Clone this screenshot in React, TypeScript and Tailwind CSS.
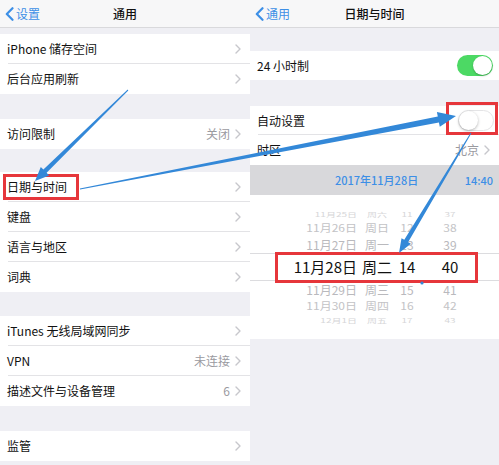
import React from 'react';

const FONT = { fontFamily: '"Noto Sans CJK SC", "Noto Sans", sans-serif' };

const Chevron: React.FC = () => (
  <svg width="6" height="10" viewBox="0 0 6 10" className="ml-[5px] shrink-0">
    <path d="M1 1l4 4-4 4" fill="none" stroke="#c7c7cc" strokeWidth="1.4" strokeLinecap="round" strokeLinejoin="round" />
  </svg>
);

const BackChevron: React.FC = () => (
  <svg width="9" height="14" viewBox="0 0 9 14" className="shrink-0">
    <path d="M7.5 1.2L1.8 7l5.7 5.8" fill="none" stroke="#3d8fe6" strokeWidth="2.2" strokeLinecap="round" strokeLinejoin="round" />
  </svg>
);

type RowProps = { label: string; value?: string; chevron?: boolean; last?: boolean; h?: string; children?: React.ReactNode };

const Row: React.FC<RowProps> = ({ label, value, chevron = true, last, h = 'h-[30px]', children }) => (
  <div className={`relative ${h} bg-white flex items-center pl-[7px] pr-[9px]`}>
    <span className="text-[12px] text-[#111] flex-1">{label}</span>
    {value && <span className="text-[12px] text-[#9a9a9f]">{value}</span>}
    {children}
    {chevron && <Chevron />}
    {!last && <div className="absolute left-[8px] right-0 bottom-0 h-px bg-[#e3e3e6]" />}
  </div>
);

const NavBar: React.FC<{ back: string; title: string }> = ({ back, title }) => (
  <div className="relative h-[28px] bg-[#f7f7f8] border-b border-[#d9d9dc] flex items-center justify-center">
    <div className="absolute left-[5px] top-0 h-full flex items-center gap-[2px]">
      <BackChevron />
      <span className="text-[12px] text-[#3d8fe6]">{back}</span>
    </div>
    <span className="text-[12px] text-[#111] font-medium">{title}</span>
  </div>
);

const Toggle: React.FC<{ on: boolean }> = ({ on }) =>
  on ? (
    <div className="w-[36px] h-[21px] rounded-full bg-[#4cd964] flex items-center justify-end pr-[1px]">
      <div className="w-[19px] h-[19px] rounded-full bg-white shadow-[0_1px_2px_rgba(0,0,0,0.25)]" />
    </div>
  ) : (
    <div className="w-[36px] h-[21px] rounded-full bg-white border border-[#e4e4e6] flex items-center pl-[0px]">
      <div className="w-[19px] h-[19px] rounded-full bg-white shadow-[0_1px_3px_rgba(0,0,0,0.3)]" />
    </div>
  );

type PickRow = { d: string; w: string; h: string; m: string; cls: string; hCls: string };

const pickerRows: PickRow[] = [
  { d: '11月25日', w: '周六', h: '11', m: '37', cls: 'text-[10px] text-[#d6d6d8] scale-y-[0.6]', hCls: 'h-[12px]' },
  { d: '11月26日', w: '周日', h: '12', m: '38', cls: 'text-[12px] text-[#c3c3c6] scale-y-[0.85]', hCls: 'h-[16px]' },
  { d: '11月27日', w: '周一', h: '13', m: '39', cls: 'text-[12px] text-[#b9b9bd]', hCls: 'h-[17px]' },
  { d: '11月28日', w: '周二', h: '14', m: '40', cls: 'text-[15px] text-[#111]', hCls: 'h-[28px] border-y border-[#dcdcdf]' },
  { d: '11月29日', w: '周三', h: '15', m: '41', cls: 'text-[12px] text-[#b9b9bd]', hCls: 'h-[17px]' },
  { d: '11月30日', w: '周四', h: '16', m: '42', cls: 'text-[12px] text-[#c3c3c6] scale-y-[0.85]', hCls: 'h-[16px]' },
  { d: '12月1日', w: '周五', h: '17', m: '43', cls: 'text-[10px] text-[#d6d6d8] scale-y-[0.6]', hCls: 'h-[12px]' },
];

// tapered arrow polygon from (x0,y0) to tip (x1,y1)
function arrow(x0: number, y0: number, x1: number, y1: number, w0: number, w1: number, hl: number, hw: number) {
  const dx = x1 - x0;
  const dy = y1 - y0;
  const len = Math.hypot(dx, dy);
  const ux = dx / len;
  const uy = dy / len;
  const nx = -uy;
  const ny = ux;
  const bx = x1 - ux * hl;
  const by = y1 - uy * hl;
  const p = (x: number, y: number) => `${x.toFixed(1)},${y.toFixed(1)}`;
  return [
    p(x0 + nx * w0 / 2, y0 + ny * w0 / 2),
    p(bx + nx * w1 / 2, by + ny * w1 / 2),
    p(bx + nx * hw / 2, by + ny * hw / 2),
    p(x1, y1),
    p(bx - nx * hw / 2, by - ny * hw / 2),
    p(bx - nx * w1 / 2, by - ny * w1 / 2),
    p(x0 - nx * w0 / 2, y0 - ny * w0 / 2),
  ].join(' ');
}

const App: React.FC = () => {
  return (
    <div className="relative w-[499px] h-[465px] overflow-hidden flex bg-[#efeff4]" style={FONT}>
      {/* left screen: 通用 */}
      <div className="w-[250px] h-full flex flex-col bg-[#efeff4]">
        <NavBar back="设置" title="通用" />
        <div className="h-[6px]" />
        <Row label="iPhone 储存空间" />
        <Row label="后台应用刷新" last />
        <div className="h-[25px]" />
        <Row label="访问限制" value="关闭" last />
        <div className="h-[23px]" />
        <Row label="日期与时间" />
        <Row label="键盘" />
        <Row label="语言与地区" />
        <Row label="词典" last />
        <div className="h-[24px]" />
        <Row label="iTunes 无线局域网同步" />
        <Row label="VPN" value="未连接" />
        <Row label="描述文件与设备管理" value="6" last />
        <div className="h-[25px]" />
        <Row label="监管" last />
      </div>

      {/* right screen: 日期与时间 */}
      <div className="w-[249px] h-full flex flex-col bg-[#efeff4]">
        <NavBar back="通用" title="日期与时间" />
        <div className="h-[23px]" />
        <Row label="24 小时制" chevron={false} last h="h-[29px]">
          <div className="mr-[-3px]">
            <Toggle on />
          </div>
        </Row>
        <div className="h-[26px]" />
        <Row label="自动设置" chevron={false} h="h-[29px]">
          <div className="mr-[-4px]">
            <Toggle on={false} />
          </div>
        </Row>
        <Row label="时区" value="北京" last />
        <div className="h-[30px] bg-[#d8d8db] flex items-center text-[11px] font-medium text-[#3d8fe6]">
          <span className="ml-[85px]">2017年11月28日</span>
          <span className="ml-auto mr-[6px]">14:40</span>
        </div>
        <div className="h-[144px] bg-white pt-[13px]">
          {pickerRows.map((r) => (
            <div key={r.d} className={`${r.hCls} flex items-center`}>
              <div className={`flex items-center w-full ${r.cls}`}>
                <span className="w-[107px] text-right">{r.d}</span>
                <span className="w-[40px] text-center">{r.w}</span>
                <span className="w-[20px] text-center">{r.h}</span>
                <span className="w-[66px] text-center">{r.m}</span>
              </div>
            </div>
          ))}
        </div>
      </div>

      {/* annotations */}
      <svg className="absolute inset-0 pointer-events-none" width="499" height="465" viewBox="0 0 499 465">
        <rect x="4.5" y="175.5" width="73" height="23" fill="none" stroke="#e6363b" strokeWidth="3" />
        <rect x="447.5" y="103.5" width="49" height="30" fill="none" stroke="#e6363b" strokeWidth="3" />
        <rect x="276.5" y="253.5" width="200" height="28" fill="none" stroke="#e6363b" strokeWidth="3" />
        <polygon points={arrow(128, 90, 35, 181, 1, 4.5, 14, 12)} fill="#3388d8" />
        <polygon points={arrow(80, 189, 456, 116, 1.2, 6, 18, 15)} fill="#3388d8" />
        <polygon points={arrow(471, 133, 399, 253, 1, 4.5, 14, 11)} fill="#3388d8" />
        <circle cx="422" cy="283" r="1.6" fill="#3388d8" />
      </svg>
    </div>
  );
};

export default App;
